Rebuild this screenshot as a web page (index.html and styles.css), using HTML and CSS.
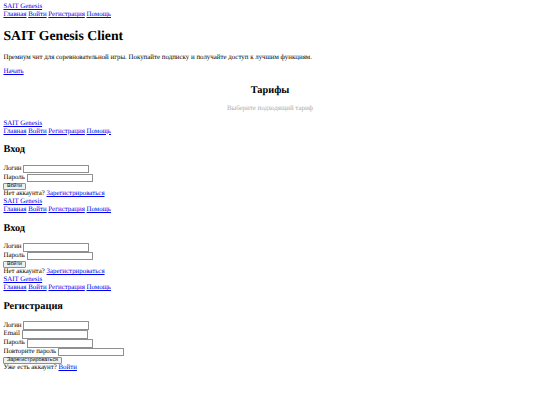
FILE: index.html
```html
<!DOCTYPE html>
<html lang="ru">
<head>
<meta charset="utf-8">
<title>SAIT Genesis Client</title>
<link rel="stylesheet" href="styles.css">
</head>
<body class="page">
  <header class="top">
    <div><a class="link" href="#">SAIT Genesis</a></div>
    <nav class="nav"><a class="link" href="#">Главная</a> <a class="link" href="#">Войти</a> <a class="link" href="#">Регистрация</a> <a class="link" href="#">Помощь</a></nav>
  </header>
  <section class="hero">
    <h1 class="hero-title">SAIT Genesis Client</h1>
    <p class="text">Премиум чит для соревновательной игры. Покупайте подписку и получайте доступ к лучшим функциям.</p>
    <p class="text"><a class="link" href="#">Начать</a></p>
  </section>
  <section class="pricing">
    <h2 class="title center">Тарифы</h2>
    <p class="text center muted">Выберите подходящий тариф</p>
  </section>

  <header class="top">
    <div><a class="link" href="#">SAIT Genesis</a></div>
    <nav class="nav"><a class="link" href="#">Главная</a> <a class="link" href="#">Войти</a> <a class="link" href="#">Регистрация</a> <a class="link" href="#">Помощь</a></nav>
  </header>
  <section class="auth">
    <h2 class="title">Вход</h2>
    <form class="form">
      <label class="row">Логин <input class="field" type="text"></label>
      <label class="row">Пароль <input class="field" type="password"></label>
      <div class="row row-btn"><button class="btn" type="button">Войти</button></div>
    </form>
    <div class="note">Нет аккаунта? <a class="link" href="#">Зарегистрироваться</a></div>
  </section>

  <header class="top">
    <div><a class="link" href="#">SAIT Genesis</a></div>
    <nav class="nav"><a class="link" href="#">Главная</a> <a class="link" href="#">Войти</a> <a class="link" href="#">Регистрация</a> <a class="link" href="#">Помощь</a></nav>
  </header>
  <section class="auth">
    <h2 class="title">Вход</h2>
    <form class="form">
      <label class="row">Логин <input class="field" type="text"></label>
      <label class="row">Пароль <input class="field" type="password"></label>
      <div class="row row-btn"><button class="btn" type="button">Войти</button></div>
    </form>
    <div class="note">Нет аккаунта? <a class="link" href="#">Зарегистрироваться</a></div>
  </section>

  <header class="top">
    <div><a class="link" href="#">SAIT Genesis</a></div>
    <nav class="nav"><a class="link" href="#">Главная</a> <a class="link" href="#">Войти</a> <a class="link" href="#">Регистрация</a> <a class="link" href="#">Помощь</a></nav>
  </header>
  <section class="auth">
    <h2 class="title">Регистрация</h2>
    <form class="form">
      <label class="row">Логин <input class="field" type="text"></label>
      <label class="row">Email <input class="field" type="email"></label>
      <label class="row">Пароль <input class="field" type="password"></label>
      <label class="row">Повторите пароль <input class="field" type="password"></label>
      <div class="row row-btn"><button class="btn" type="button">Зарегистрироваться</button></div>
    </form>
    <div class="note">Уже есть аккаунт? <a class="link" href="#">Войти</a></div>
  </section>
</body>
</html>
```

FILE: styles.css
```css
html {
  background: #ffffff;
}

.page {
  margin: 3.44px;
  font-family: "Liberation Serif", "Times New Roman", serif;
  font-size: 6.88px;
  line-height: 1.15;
  color: #000000;
  text-rendering: geometricPrecision;
}

.link {
  color: #0000ee;
  text-decoration: underline;
}

.hero-title {
  font-size: 13.76px;
  font-weight: bold;
  margin: 9.22px 0;
  line-height: 1.15;
}

.text {
  margin: 6.88px 0;
}

.title {
  font-size: 10.32px;
  font-weight: bold;
  margin: 8.57px 0;
  line-height: 1.15;
}

.center {
  text-align: center;
}

.muted {
  color: #aaaaaa;
}

.form {
  margin: 0;
}

.row {
  display: flex;
  align-items: center;
  gap: 1.72px;
  height: 8.85px;
}

.row-btn {
  height: 7.8px;
}

.field {
  box-sizing: border-box;
  width: 66px;
  height: 8.5px;
  padding: 0 1px;
  margin: 0;
  border: 1px solid #8f8f8f;
  border-radius: 0.5px;
  font-family: "Liberation Sans", Arial, sans-serif;
  font-size: 5.7px;
  background: #ffffff;
}

.btn {
  box-sizing: border-box;
  height: 7.6px;
  padding: 0 2.6px;
  margin: 0;
  border: 1px solid #8f8f8f;
  border-radius: 1px;
  background: #efefef;
  font-family: "Liberation Sans", Arial, sans-serif;
  font-size: 5.4px;
  line-height: 1;
  color: #000000;
  text-rendering: geometricPrecision;
}
```
